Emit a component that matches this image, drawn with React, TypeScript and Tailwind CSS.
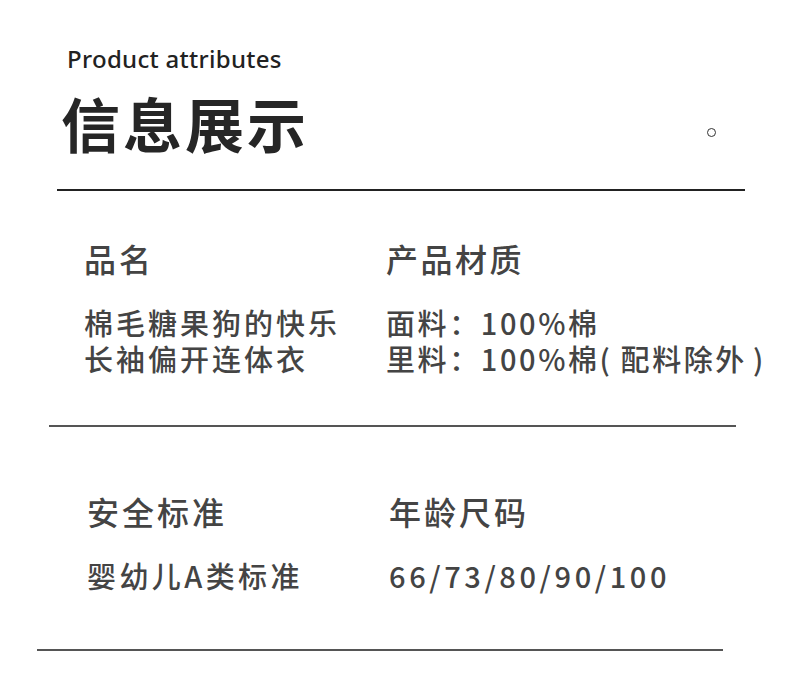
import React from "react";

const cjk = { fontFamily: '"Noto Sans CJK SC", "Noto Sans", sans-serif' };

export default function App() {
  return (
    <div className="w-[790px] h-[693px] bg-white overflow-hidden text-[#222]" style={cjk}>
      {/* Header */}
      <div className="pl-[67px] pt-[47px]">
        <p className="text-[24px] leading-none font-medium tracking-[0.3px]" style={{ fontFamily: '"Noto Sans", sans-serif' }}>
          Product attributes
        </p>
      </div>
      <div className="flex items-center pl-[61px] pr-[74px] mt-[22px]">
        <h1 className="text-[59px] leading-none font-bold tracking-[3px] text-[#262626]">信息展示</h1>
        <span className="ml-auto mt-[20px] w-[9px] h-[9px] rounded-full border-[1.5px] border-[#333]" />
      </div>
      <div className="ml-[57px] w-[688px] h-[2px] bg-[#222] mt-[37px]" />

      {/* Row 1 */}
      <div className="grid grid-cols-[302px_1fr] pl-[84px] pt-[51px] text-[#444]">
        <div>
          <p className="text-[32px] leading-none font-medium tracking-[3px]">品名</p>
          <div className="mt-[30px] text-[29px] leading-[36px] font-medium tracking-[3px]">
            <p>棉毛糖果狗的快乐</p>
            <p>长袖偏开连体衣</p>
          </div>
        </div>
        <div>
          <p className="text-[32px] leading-none font-medium tracking-[2.5px]">产品材质</p>
          <div className="mt-[30px] text-[29px] leading-[36px] font-medium tracking-[2.6px]">
            <p>面料：100%棉</p>
            <p>
              里料：100%棉(<span className="ml-[8px]">配料除外</span>
              <span className="ml-[6px]">)</span>
            </p>
          </div>
        </div>
      </div>
      <div className="ml-[49px] w-[687px] h-[2px] bg-[#555] mt-[49px]" />

      {/* Row 2 */}
      <div className="grid grid-cols-[302px_1fr] pl-[87px] pt-[68px] text-[#444]">
        <div>
          <p className="text-[32px] leading-none font-medium tracking-[3px]">安全标准</p>
          <p className="mt-[30px] text-[29px] leading-[36px] font-medium tracking-[3.4px]">婴幼儿A类标准</p>
        </div>
        <div>
          <p className="text-[32px] leading-none font-medium tracking-[3px]">年龄尺码</p>
          <p className="mt-[30px] text-[29px] leading-[36px] font-medium tracking-[3.6px]">66/73/80/90/100</p>
        </div>
      </div>
      <div className="ml-[37px] w-[686px] h-[2px] bg-[#555] mt-[56px]" />
    </div>
  );
}
